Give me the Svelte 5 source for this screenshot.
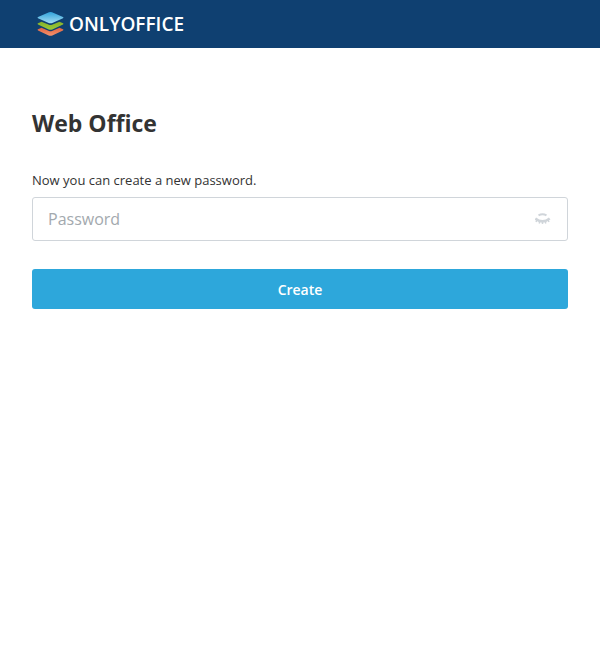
<script>
  let password = $state('');
  let visible = $state(false);
</script>

<header>
  <a class="brand" href="/" aria-label="ONLYOFFICE">
    <svg width="28" height="26" viewBox="0 0 28 26" aria-hidden="true">
      <defs>
        <linearGradient id="blue" x1="0" y1="0" x2="0" y2="1">
          <stop offset="0" stop-color="#31a3db" />
          <stop offset="1" stop-color="#a5def2" />
        </linearGradient>
        <linearGradient id="green" x1="0" y1="0" x2="0" y2="1">
          <stop offset="0" stop-color="#86b02a" />
          <stop offset="1" stop-color="#9bcb36" />
        </linearGradient>
        <linearGradient id="red" x1="0" y1="0" x2="0" y2="1">
          <stop offset="0" stop-color="#e0633f" />
          <stop offset="1" stop-color="#f3936f" />
        </linearGradient>
      </defs>
      <path fill="url(#red)" d="M1 18.300 4.500 16.700l7.500 3.300q1.500.6 3 0l7.500-3.300 3.500 1.600q1 .6 0 1.200l-10.700 5q-1.800.7-3.600 0L1 19.500q-1-.6 0-1.200z" />
      <path fill="url(#green)" d="M1 12.300 4.500 10.700l7.500 3.100q1.500.6 3 0l7.500-3.100 3.500 1.600q1 .6 0 1.200l-10.700 5q-1.800.7-3.600 0L1 13.500q-1-.6 0-1.200z" />
      <path fill="url(#blue)" d="M1 6.100 12 1.300q1.500-.5 3 0l11 4.800q1 .6 0 1.200l-10.700 4.700q-1.800.7-3.600 0L1 7.300q-1-.6 0-1.200z" />
    </svg>
    <span>ONLYOFFICE</span>
  </a>
</header>

<main>
  <h1>Web Office</h1>
  <form onsubmit={(e) => e.preventDefault()}>
    <label for="password">Now you can create a new password.</label>
    <div class="field">
      <input id="password" type={visible ? 'text' : 'password'} placeholder="Password" bind:value={password} />
      <button class="eye" type="button" aria-label="Show password" onclick={() => (visible = !visible)}>
        <svg width="16" height="16" viewBox="0 0 16 16" fill="none" stroke="#d0d5da" aria-hidden="true">
          <path stroke-width="2" d="M3.500 4.300q4-2.300 8 0" />
          <path stroke-width="2.500" d="M.3 7.600Q7.500 13.200 14.700 7.600" />
          <path stroke-width="1.500" d="M2 9 1 11M4.800 10.300l-.6 2.200M7.500 10.500V13M10.200 10.300l.6 2.200M13 9l1 2" />
        </svg>
      </button>
    </div>
    <button class="create" type="submit">Create</button>
  </form>
</main>

<style>
  :global(body) {
    margin: 0;
    background: #fff;
    color: #333;
    font-family: 'Open Sans', sans-serif;
  }

  header {
    display: flex;
    align-items: center;
    height: 48px;
    padding: 0 37px;
    background: #0f4071;
  }

  .brand {
    display: flex;
    align-items: center;
    gap: 4px;
    color: #fff;
    font-size: 19px;
    font-weight: 600;
    line-height: 26px;
    text-decoration: none;
  }

  main {
    padding: 59px 32px 32px;
  }

  h1 {
    margin: 0 0 32px;
    font-size: 23px;
    font-weight: 700;
    line-height: 32px;
  }

  label {
    display: block;
    margin-bottom: 8px;
    font-size: 13px;
    line-height: 18px;
  }

  .field {
    display: flex;
    align-items: center;
    box-sizing: border-box;
    height: 44px;
    margin-bottom: 28px;
    padding: 0 16px 0 15px;
    border: 1px solid #d0d5da;
    border-radius: 3px;
  }

  .field:focus-within {
    border-color: #2da7db;
  }

  input {
    flex: 1;
    min-width: 0;
    padding: 0;
    border: 0;
    outline: 0;
    background: none;
    color: #333;
    font: 16px/22px 'Open Sans', sans-serif;
  }

  input::placeholder {
    color: #a3a9ae;
    opacity: 1;
  }

  .eye {
    display: flex;
    padding: 0;
    border: 0;
    background: none;
    cursor: pointer;
  }

  .create {
    display: block;
    width: 100%;
    height: 40px;
    padding: 2px 0 0;
    border: 0;
    border-radius: 3px;
    background: #2da7db;
    color: #fff;
    font: 600 14px/20px 'Open Sans', sans-serif;
    cursor: pointer;
  }
</style>
